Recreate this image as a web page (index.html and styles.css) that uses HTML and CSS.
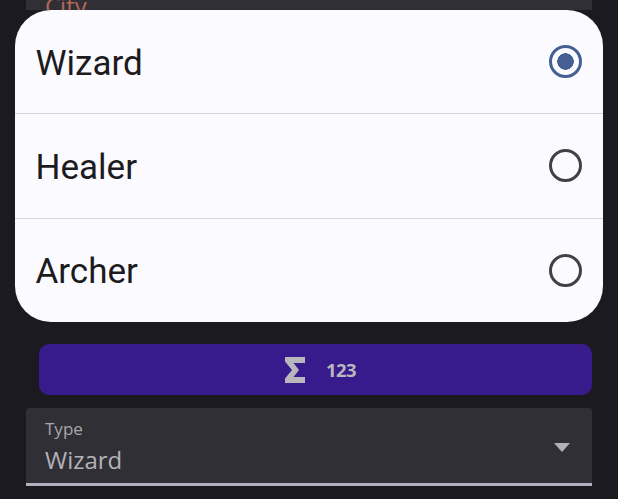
FILE: index.html
```html
<!DOCTYPE html>
<html lang="en">
<head>
  <meta charset="UTF-8">
  <meta name="viewport" content="width=device-width">
  <title>Type</title>
  <link rel="stylesheet" href="styles.css">
</head>
<body>
  <main class="page">
    <div class="field field-city">
      <span class="city-label">City</span>
    </div>
    <button class="calc" type="button">
      <svg class="sigma" viewBox="0 0 20 26" width="20" height="26" aria-hidden="true">
        <path d="M0 0H20V6H8.5L14 13L8.5 20H20V26H0V21.5L7 13L0 4.5Z" fill="#b9b7bd"/>
      </svg>
      <span>123</span>
    </button>
    <div class="field field-select">
      <div class="select-text">
        <span class="select-label">Type</span>
        <span class="select-value">Wizard</span>
      </div>
      <span class="arrow"></span>
    </div>
  </main>

  <form class="dialog">
    <label class="option">
      <span>Wizard</span>
      <input type="radio" name="type" checked>
    </label>
    <label class="option">
      <span>Healer</span>
      <input type="radio" name="type">
    </label>
    <label class="option">
      <span>Archer</span>
      <input type="radio" name="type">
    </label>
  </form>
</body>
</html>
```

FILE: styles.css
```css
body {
  margin: 0;
  height: 499px;
  overflow: hidden;
  background: #1a1a20;
  font-family: "Open Sans", sans-serif;
}
.page {
  display: flex;
  flex-direction: column;
  padding: 0 26px;
}
.field {
  background: #2f2f35;
}
.field-city {
  height: 10px;
  overflow: hidden;
}
.city-label {
  display: block;
  margin: -6px 0 0 19px;
  font-size: 24px;
  line-height: 24px;
  color: #b5675a;
}
.calc {
  display: flex;
  align-items: center;
  justify-content: center;
  gap: 21px;
  height: 51px;
  width: 553px;
  margin: 334px 0 0 13px;
  padding: 0 0 0 10px;
  border: 0;
  border-radius: 10px;
  background: #371b8c;
  color: #b9b7bd;
  font-family: "Open Sans", sans-serif;
  font-size: 18.5px;
  font-weight: 700;
  letter-spacing: -0.5px;
}
.field-select {
  display: flex;
  align-items: center;
  justify-content: space-between;
  height: 75px;
  margin-top: 13px;
  padding: 0 22px 0 19px;
  border-bottom: 3px solid #b3b0bd;
  border-radius: 4px 4px 0 0;
}
.select-text {
  display: flex;
  flex-direction: column;
  margin-top: 3px;
}
.select-label {
  margin-bottom: 4px;
  font-size: 17px;
  line-height: 21px;
  color: #a9a7ae;
}
.select-value {
  font-size: 24px;
  line-height: 33px;
  color: #b4b2b8;
}
.arrow {
  width: 0;
  height: 0;
  margin-top: 3px;
  border-left: 8px solid transparent;
  border-right: 8px solid transparent;
  border-top: 9px solid #b3b1b7;
}
.dialog {
  position: absolute;
  top: 10px;
  left: 15px;
  width: 588px;
  height: 312px;
  border-radius: 36px;
  background: #fbfaff;
  overflow: hidden;
  display: flex;
  flex-direction: column;
}
.option {
  flex: 1;
  display: flex;
  align-items: center;
  justify-content: space-between;
  padding: 0 21px;
  font-family: Roboto, sans-serif;
  font-size: 35px;
  color: #1b1b20;
}
.option span {
  margin: 3px 0 0 -0.5px;
}
.option + .option {
  border-top: 1px solid #d6d5d9;
}
.option input {
  appearance: none;
  width: 33px;
  height: 33px;
  margin: 0;
  border: 3px solid #404046;
  border-radius: 50%;
}
.option input:checked {
  border-color: #445f92;
  background: radial-gradient(circle, #445f92 0 8px, transparent 8.5px);
}
```
